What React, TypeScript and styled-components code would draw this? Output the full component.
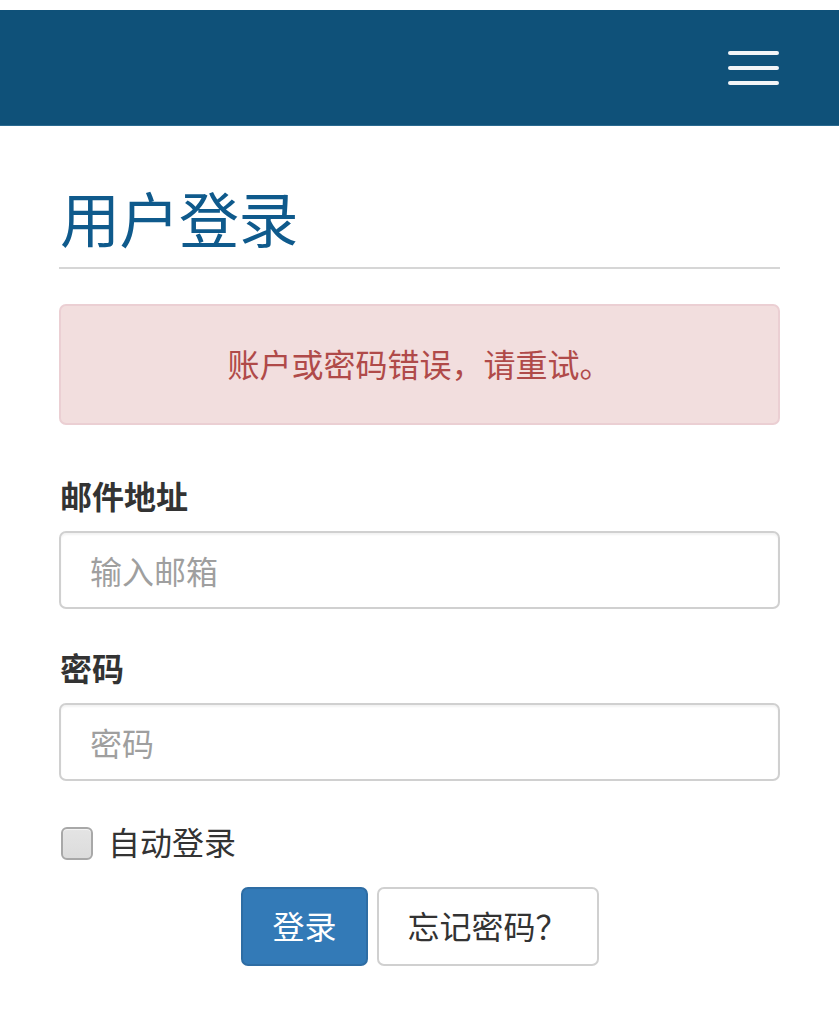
import React from "react";
import styled, { createGlobalStyle } from "styled-components";

const Global = createGlobalStyle`
  html, body { margin: 0; padding: 0; background: #ffffff; }
  body {
    font-family: "Noto Sans CJK SC", "Noto Sans", sans-serif;
    color: #333333;
  }
  * { box-sizing: border-box; }
`;

const Page = styled.div`
  padding-top: 10px;
  background: #ffffff;
`;

const NavBar = styled.header`
  height: 116px;
  background: #0f5179;
  border-bottom: 1px solid #2a6a90;
  display: flex;
  align-items: center;
  justify-content: flex-end;
  padding: 0 58px 0 0;
`;

const MenuButton = styled.button`
  width: 54px;
  height: 40px;
  background: transparent;
  border: none;
  padding: 0 1px;
  display: flex;
  flex-direction: column;
  justify-content: center;
  gap: 11px;
  cursor: pointer;
`;

const MenuBar = styled.span`
  display: block;
  height: 4px;
  width: 51px;
  border-radius: 2px;
  background: #f2f4f6;
`;

const Container = styled.main`
  padding: 0 59px;
`;

const Title = styled.h1`
  margin: 58px 0 0;
  padding: 0 0 17px 1px;
  font-size: 60px;
  line-height: 66px;
  font-weight: 400;
  color: #0f5a8c;
  border-bottom: 2px solid #d6d6d6;
  letter-spacing: -0.5px;
`;

const Alert = styled.div`
  margin-top: 35px;
  height: 121px;
  background: #f2dede;
  border: 2px solid #ebcfd3;
  border-radius: 7px;
  color: #b04a49;
  font-size: 32px;
  display: flex;
  align-items: center;
  justify-content: center;
  padding-bottom: 3px;
`;

const Field = styled.div<{ $top: number }>`
  margin-top: ${(p) => p.$top}px;
  display: flex;
  flex-direction: column;
`;

const Label = styled.label`
  font-size: 32px;
  line-height: 44px;
  font-weight: 700;
  color: #333333;
  padding-left: 1px;
`;

const Input = styled.input`
  margin-top: 14px;
  height: 78px;
  width: 100%;
  border: 2px solid #d0d0d0;
  border-radius: 7px;
  padding: 0 29px;
  font-size: 32px;
  font-family: "Noto Sans CJK SC", "Noto Sans", sans-serif;
  color: #555555;
  background: #ffffff;
  box-shadow: inset 0 2px 2px rgba(0, 0, 0, 0.05);
  outline: none;
  &::placeholder {
    color: #9f9f9f;
  }
`;

const CheckRow = styled.label`
  margin-top: 38px;
  display: flex;
  align-items: center;
  gap: 15px;
  font-size: 32px;
  line-height: 44px;
  color: #333333;
  padding-left: 2px;
`;

const CheckBox = styled.span`
  width: 32px;
  height: 33px;
  border-radius: 6px;
  border: 2px solid #a8a8a8;
  background: linear-gradient(#e4e4e4, #dcdcdc);
  box-shadow: inset 0 1px 1px rgba(255, 255, 255, 0.6);
  margin-top: 4px;
`;

const Actions = styled.div`
  margin-top: 24px;
  display: flex;
  justify-content: center;
  gap: 9px;
  padding-left: 1px;
`;

const Button = styled.button<{ $primary?: boolean }>`
  height: 79px;
  padding: 0 29px 3px;
  font-size: 32px;
  font-family: "Noto Sans CJK SC", "Noto Sans", sans-serif;
  border-radius: 7px;
  border: 2px solid ${(p) => (p.$primary ? "#2e6da4" : "#d0d0d0")};
  background: ${(p) => (p.$primary ? "#337ab7" : "#ffffff")};
  color: ${(p) => (p.$primary ? "#ffffff" : "#333333")};
  cursor: pointer;
`;

export default function App() {
  return (
    <Page>
      <Global />
      <NavBar>
        <MenuButton aria-label="menu">
          <MenuBar />
          <MenuBar />
          <MenuBar />
        </MenuButton>
      </NavBar>
      <Container>
        <Title>用户登录</Title>
        <Alert>账户或密码错误，请重试。</Alert>
        <Field $top={48}>
          <Label>邮件地址</Label>
          <Input type="email" placeholder="输入邮箱" />
        </Field>
        <Field $top={36}>
          <Label>密码</Label>
          <Input type="password" placeholder="密码" />
        </Field>
        <CheckRow>
          <CheckBox />
          自动登录
        </CheckRow>
        <Actions>
          <Button $primary>登录</Button>
          <Button>忘记密码？</Button>
        </Actions>
      </Container>
    </Page>
  );
}
